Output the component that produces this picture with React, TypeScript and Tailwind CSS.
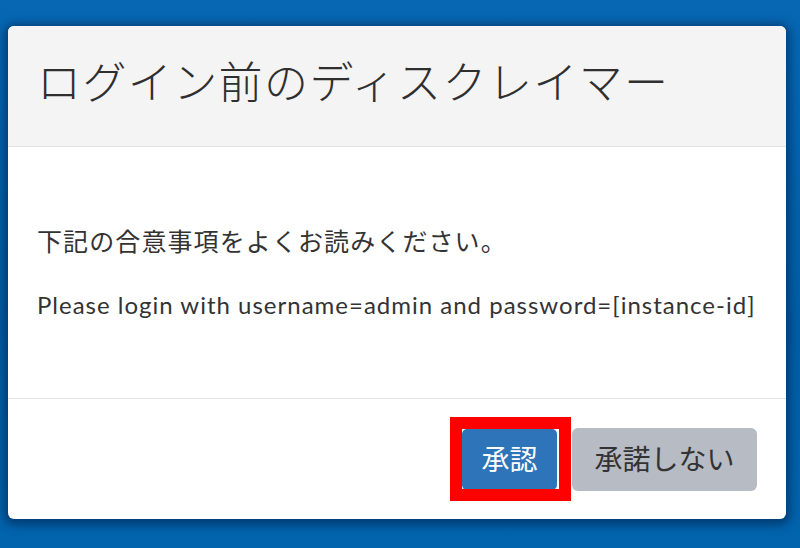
import React from "react"

const font = { fontFamily: 'Lato, "Noto Sans CJK JP", sans-serif' }

const DisclaimerModal = () => (
    <div className="flex flex-col w-[778px] h-[493px] bg-white rounded-[6px] shadow-[0_2px_10px_4px_rgba(0,30,70,0.55)] overflow-hidden">
        <div className="flex items-center h-[121px] pl-[29px] pb-[8px] bg-[#f4f4f4] border-b border-b-[#e2e2e2]">
            <h1 className="text-[44px] leading-none text-[#2f2f2f] tracking-[1.4px] font-light">ログイン前のディスクレイマー</h1>
        </div>
        <div className="flex flex-col justify-center gap-[36px] h-[252px] pl-[29px] border-b border-b-[#e2e2e2] text-[#333]">
            <p className="text-[25px] leading-[28px] tracking-[1.1px]">下記の合意事項をよくお読みください。</p>
            <p className="text-[24px] leading-[28px] tracking-[1px]">Please login with username=admin and password=[instance-id]</p>
        </div>
        <div className="flex flex-1 items-center justify-end gap-[15px] pr-[29px]">
            <div className="relative">
                <button className="w-[95px] h-[61px] rounded-[5px] bg-[#2d74b9] text-white text-[28px]">承認</button>
                <div className="absolute left-[-12px] top-[-12px] w-[121px] h-[84px] border-[12px] border-[#ff0000]" />
            </div>
            <button className="w-[185px] h-[63px] rounded-[6px] bg-[#b7bbc3] text-[#333] text-[28px]">承諾しない</button>
        </div>
    </div>
)

const App = () => (
    <div
        className="w-[800px] h-[548px] pt-[26px] pl-[8px] bg-[linear-gradient(180deg,#0767b3_0%,#005ea6_60%,#0264ad_100%)]"
        style={font}
    >
        <DisclaimerModal />
    </div>
)

export default App
